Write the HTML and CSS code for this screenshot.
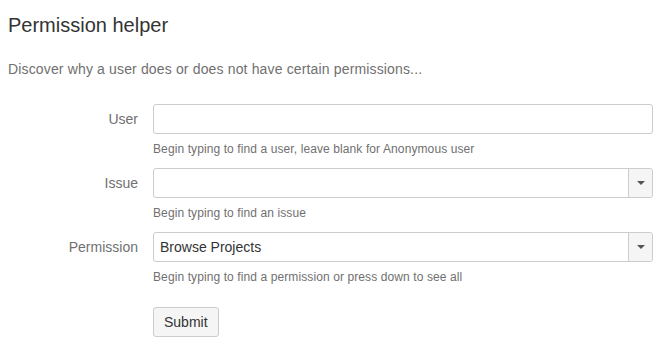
FILE: index.html
```html
<!DOCTYPE html>
<html>
<head>
<meta charset="utf-8">
<link rel="stylesheet" href="styles.css">
</head>
<body>
<div class="page">
  <h1 class="title">Permission helper</h1>
  <p class="intro">Discover why a user does or does not have certain permissions...</p>
  <form class="form">
    <div class="row">
      <label class="label">User</label>
      <div class="field">
        <div class="input"></div>
        <div class="help">Begin typing to find a user, leave blank for Anonymous user</div>
      </div>
    </div>
    <div class="row">
      <label class="label">Issue</label>
      <div class="field">
        <div class="input select"><span class="value"></span><span class="drop"><svg width="8" height="4" viewBox="0 0 8 4"><path d="M0 0h8L4 4z" fill="#555"/></svg></span></div>
        <div class="help">Begin typing to find an issue</div>
      </div>
    </div>
    <div class="row">
      <label class="label">Permission</label>
      <div class="field">
        <div class="input select"><span class="value">Browse Projects</span><span class="drop"><svg width="8" height="4" viewBox="0 0 8 4"><path d="M0 0h8L4 4z" fill="#555"/></svg></span></div>
        <div class="help">Begin typing to find a permission or press down to see all</div>
      </div>
    </div>
    <div class="row">
      <span class="label"></span>
      <div class="field">
        <button type="button" class="btn">Submit</button>
      </div>
    </div>
  </form>
</div>
</body>
</html>
```

FILE: styles.css
```css
* { box-sizing: border-box; }
html, body { margin: 0; padding: 0; background: #fff; }
body { font-family: "Liberation Sans", Arial, sans-serif; color: #333; }
.page { padding: 0 0 0 8px; }
.title {
  margin: 13px 0 0;
  font-size: 20px;
  line-height: 24px;
  font-weight: normal;
  color: #333;
}
.intro {
  margin: 22px 0 25px;
  font-size: 14px;
  line-height: 20px;
  letter-spacing: 0.15px;
  color: #707070;
}
.form { margin: 0; }
.row {
  display: grid;
  grid-template-columns: 130px 500px;
  column-gap: 15px;
}
.label {
  text-align: right;
  font-size: 14px;
  line-height: 30px;
  color: #707070;
}
.input {
  height: 30px;
  border: 1px solid #ccc;
  border-radius: 3px;
  background: #fff;
}
.select {
  display: flex;
  align-items: stretch;
}
.value {
  flex: 1;
  padding-left: 6px;
  font-size: 14px;
  line-height: 28px;
  color: #333;
}
.drop {
  width: 24px;
  border-left: 1px solid #ccc;
  background: #f5f5f5;
  border-radius: 0 3px 3px 0;
  display: flex;
  align-items: center;
  justify-content: center;
}
.help {
  margin: 7px 0 10px;
  font-size: 12px;
  line-height: 17px;
  letter-spacing: 0.1px;
  color: #707070;
}
.btn {
  margin-top: 11px;
  height: 30px;
  padding: 0 10px;
  border: 1px solid #ccc;
  border-radius: 3px;
  background: #f5f5f5;
  font-family: "Liberation Sans", Arial, sans-serif;
  font-size: 14px;
  color: #333;
}
```
